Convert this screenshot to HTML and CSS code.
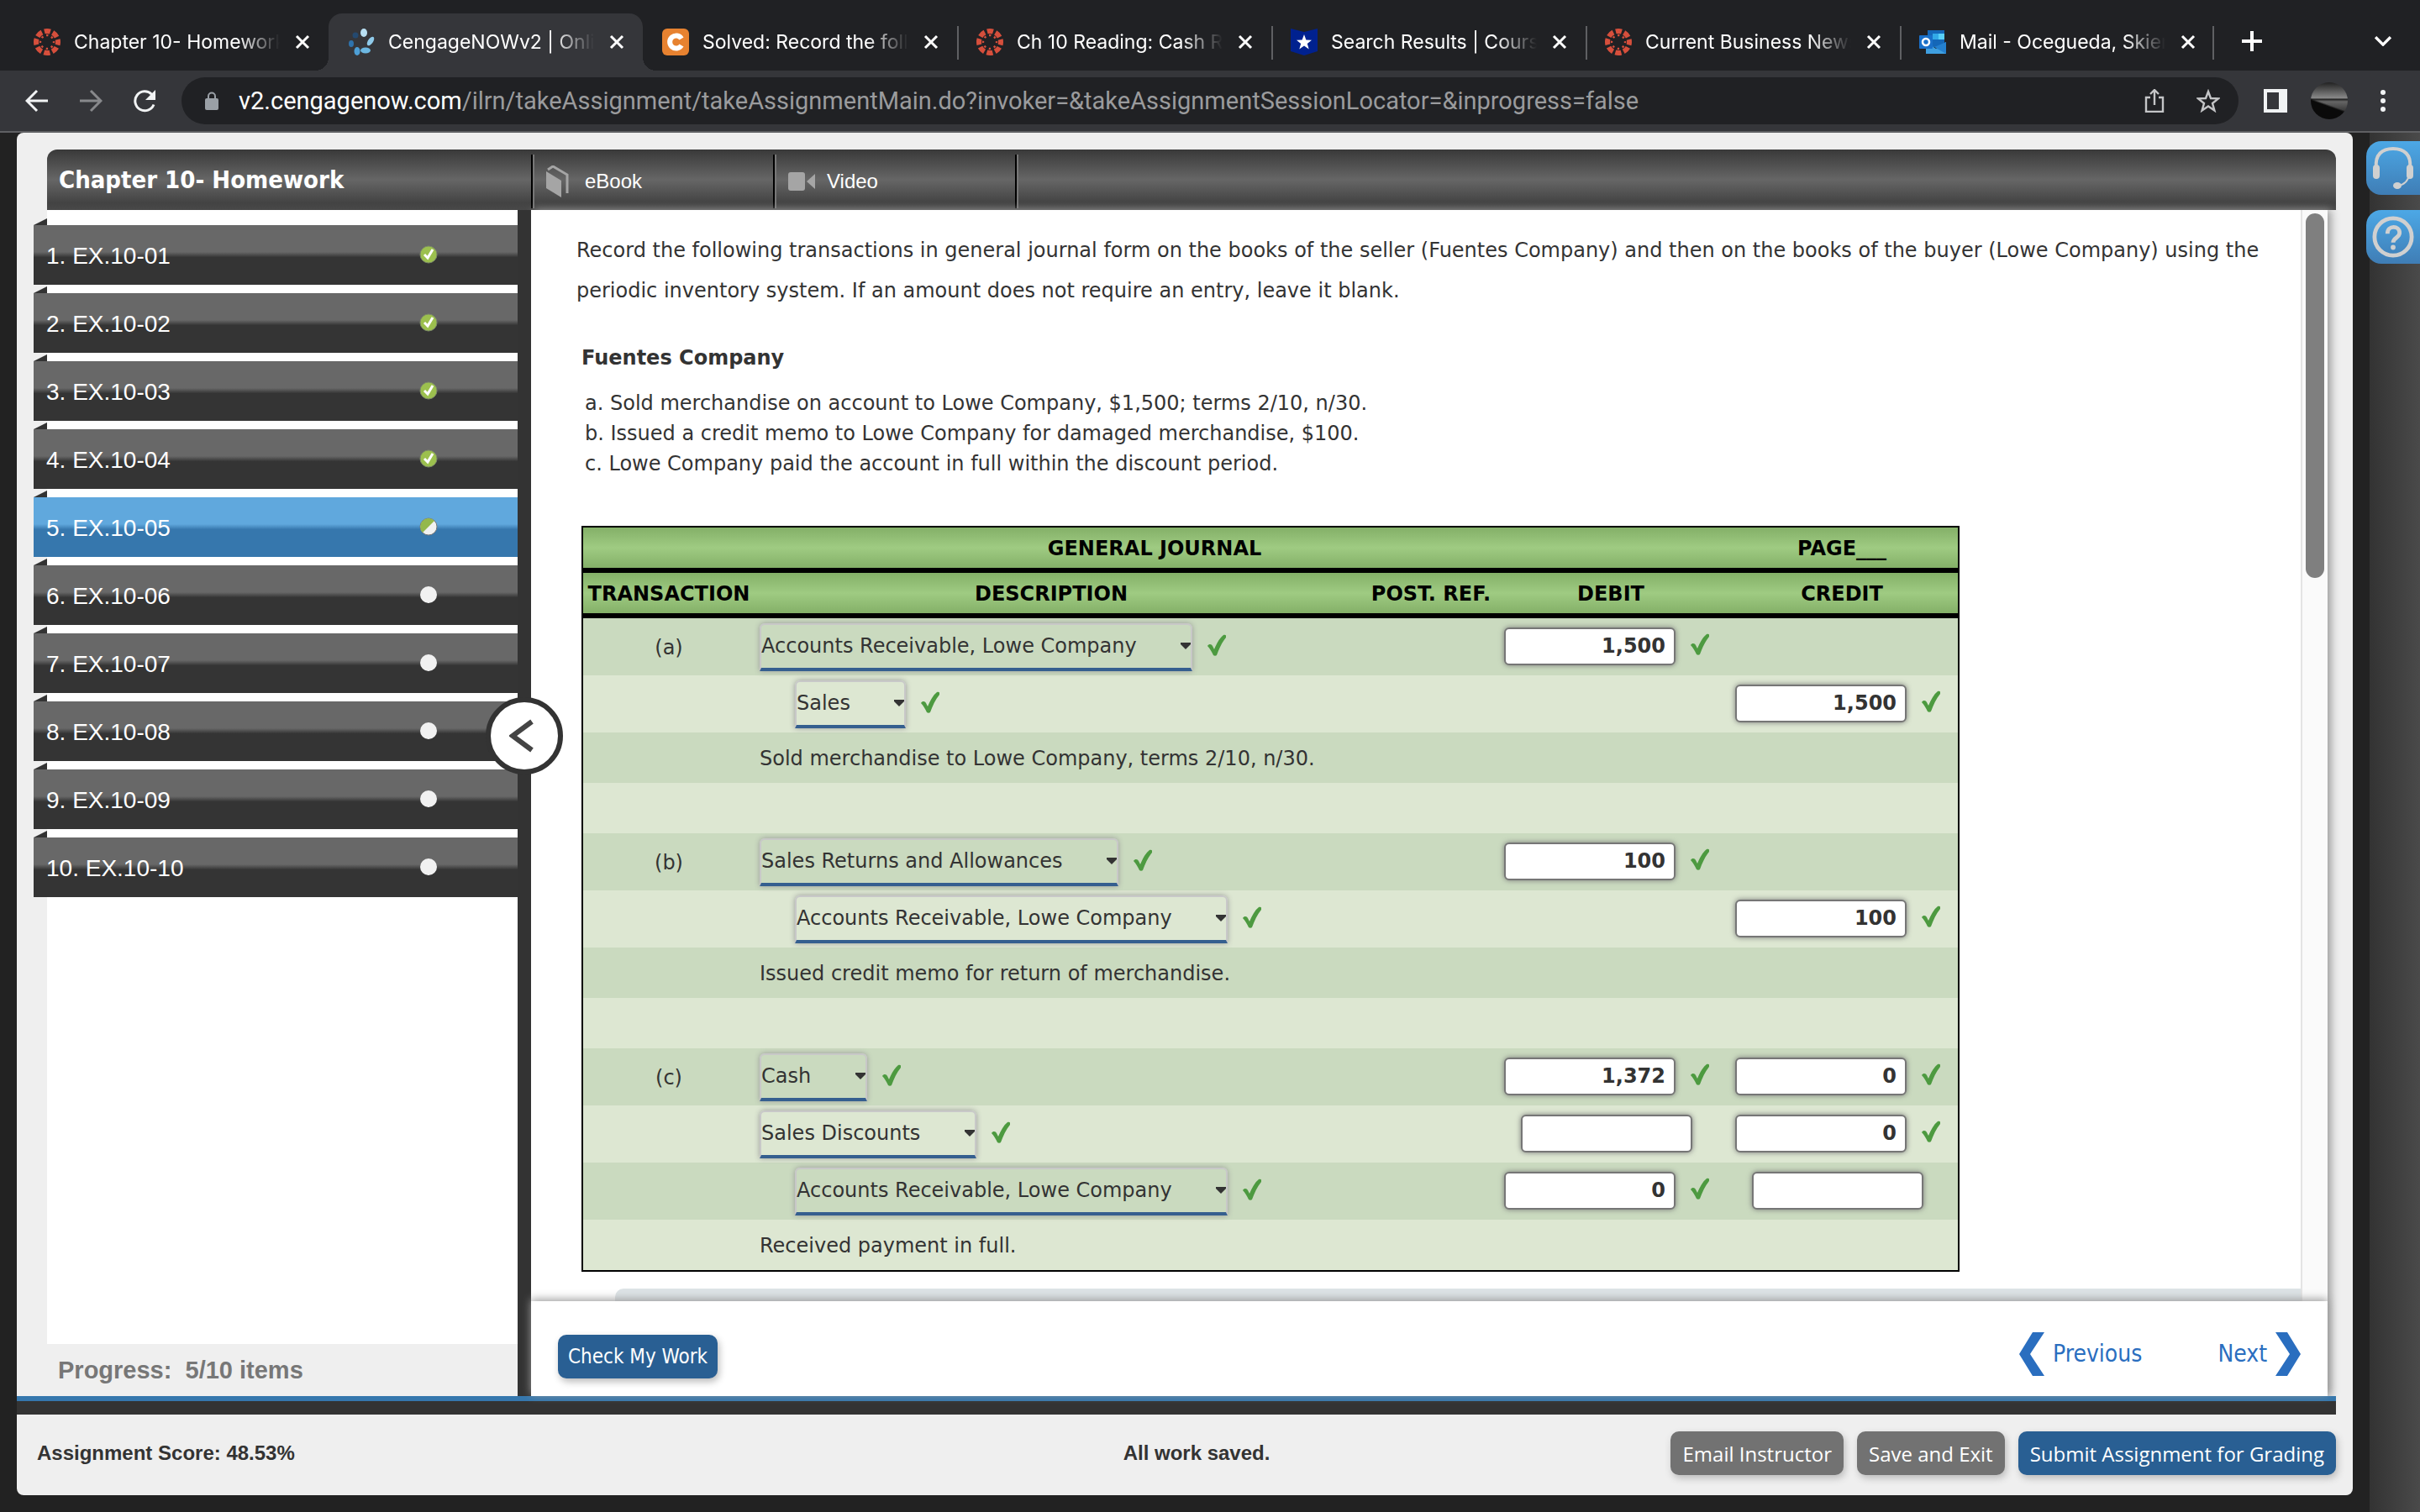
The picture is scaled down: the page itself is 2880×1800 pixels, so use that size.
FILE: index.html
```
<!DOCTYPE html>
<html lang="en">
<head>
  <meta charset="UTF-8">
  <meta name="viewport" content="width=device-width, initial-scale=1">
  <title>CengageNOWv2 | Online teaching and learning</title>
  <link rel="stylesheet" href="styles.css">
</head>
<body>
  <!-- shared icons -->
  <svg class="sprite" aria-hidden="true">
    <symbol id="i-close" viewBox="0 0 18 18"><path d="M2 2l14 14M16 2L2 16" fill="none" stroke="#fff" stroke-width="3"/></symbol>
    <symbol id="i-canvas" viewBox="0 0 32 32">
      <g fill="none" stroke="#d64f3c">
        <circle cx="16" cy="16" r="13" stroke-width="6" stroke-dasharray="7.2 3.01" stroke-dashoffset="3.6"/>
        <circle cx="16" cy="16" r="8" stroke-width="2.4" stroke-dasharray="2.4 3.88" stroke-dashoffset="1.2"/>
      </g>
    </symbol>
    <symbol id="i-check" viewBox="0 0 22 26"><path d="M0 14c2-3 5-2 6 0l2 4C11 11 14 5 19 1c2-1 4 0 3 3-5 6-8 13-11 21-1 1-3 1-4 0C5 21 3 17 0 14z" fill="#4d9a40"/></symbol>
    <symbol id="i-done" viewBox="0 0 22 22">
      <circle cx="11" cy="11" r="10" fill="#9cc04e" stroke="#7c8a68"/>
      <path d="M6 11l4 4 6-10" fill="none" stroke="#fff" stroke-width="3"/>
    </symbol>
    <symbol id="i-half" viewBox="0 0 22 22">
      <circle cx="11" cy="11" r="10" fill="#f1f1f1" stroke="#777"/>
      <path d="M4 18A9.500 9.500 0 0 1 18 4z" fill="#94b84b"/>
    </symbol>
    <symbol id="i-todo" viewBox="0 0 22 22"><circle cx="11" cy="11" r="10" fill="#f1f1f1"/></symbol>
  </svg>

  <div class="tabs">
    <div class="tab"><svg class="fav"><use href="#i-canvas"/></svg><span class="tab-name">Chapter 10- Homework</span><button class="close" aria-label="Close tab"><svg><use href="#i-close"/></svg></button></div>
    <div class="tab active">
      <svg class="fav" viewBox="0 0 32 32">
        <g fill="#4d9fd6">
          <ellipse cx="19" cy="5" rx="4" ry="5" fill="#b9dff2"/><ellipse cx="27" cy="15" rx="3" ry="6" transform="rotate(35 27 15)" fill="#8fcaea"/>
          <ellipse cx="21" cy="26" rx="6" ry="3.500" fill="#6db8e2"/><ellipse cx="11" cy="27" rx="3.500" ry="5"/>
          <ellipse cx="4" cy="18" rx="3" ry="4" fill="#2e73ad"/><circle cx="9" cy="8" r="3.500" fill="#24496f"/>
        </g>
      </svg>
      <span class="tab-name">CengageNOWv2 | Online</span><button class="close" aria-label="Close tab"><svg><use href="#i-close"/></svg></button>
    </div>
    <div class="tab">
      <svg class="fav" viewBox="0 0 32 32"><rect width="32" height="32" rx="6" fill="#e78230"/><path d="M23 12a7.500 7.500 0 1 0 0 8" fill="none" stroke="#fff" stroke-width="6"/></svg>
      <span class="tab-name">Solved: Record the following</span><button class="close" aria-label="Close tab"><svg><use href="#i-close"/></svg></button>
    </div>
    <div class="tab line"><svg class="fav"><use href="#i-canvas"/></svg><span class="tab-name">Ch 10 Reading: Cash Re</span><button class="close" aria-label="Close tab"><svg><use href="#i-close"/></svg></button></div>
    <div class="tab line">
      <svg class="fav" viewBox="0 0 32 32"><path d="M0 0l16 4L32 0v27l-16 5-16-5z" fill="#00218f"/><path d="M16 7l2.400 6.600 6.600.2-5.200 4.200 1.900 6.500L16 20.600l-5.700 3.900 1.900-6.500L7 13.800l6.600-.2z" fill="#fff"/></svg>
      <span class="tab-name">Search Results | Course</span><button class="close" aria-label="Close tab"><svg><use href="#i-close"/></svg></button>
    </div>
    <div class="tab line"><svg class="fav"><use href="#i-canvas"/></svg><span class="tab-name">Current Business News</span><button class="close" aria-label="Close tab"><svg><use href="#i-close"/></svg></button></div>
    <div class="tab line last">
      <svg class="fav" viewBox="0 0 32 32">
        <path d="M10 2h20v20H10z" fill="#1467b8"/><path d="M16 6h7v7h-7z" fill="#32a9e7"/><path d="M23 6h7v7h-7z" fill="#58d0f8"/>
        <path d="M8 16l12 8 12-8v14H8z" fill="#3f9fe0"/><path d="M32 16v14L18 22z" fill="#2480cf"/>
        <rect y="8" width="16" height="16" rx="1" fill="#1a70c9"/><circle cx="8" cy="16" r="4" fill="none" stroke="#fff" stroke-width="2.500"/>
      </svg>
      <span class="tab-name">Mail - Ocegueda, Skier</span><button class="close" aria-label="Close tab"><svg><use href="#i-close"/></svg></button>
    </div>
    <button class="new-tab" aria-label="New tab"><svg viewBox="0 0 24 24"><path d="M12 0v24M0 12h24" stroke="#fff" stroke-width="4"/></svg></button>
    <button class="tab-menu" aria-label="Search tabs"><svg viewBox="0 0 18 12"><path d="M1 2l8 8 8-8" fill="none" stroke="#fff" stroke-width="3"/></svg></button>
  </div>

  <div class="toolbar">
    <button class="nav" aria-label="Back"><svg viewBox="0 0 28 28"><path d="M27 14H3M14 2L2 14l12 12" fill="none" stroke="#f1f3f4" stroke-width="3"/></svg></button>
    <button class="nav" aria-label="Forward"><svg viewBox="0 0 28 28"><path d="M1 14h24M14 2l12 12-12 12" fill="none" stroke="#88898c" stroke-width="3"/></svg></button>
    <button class="nav" aria-label="Reload"><svg viewBox="0 0 28 28"><path d="M25 18.500A11.500 11.500 0 1 1 22.500 6.200" fill="none" stroke="#f1f3f4" stroke-width="3"/><path d="M27 1v12H15z" fill="#f1f3f4"/></svg></button>
    <div class="omnibox">
      <svg class="lock" viewBox="0 0 16 22"><path d="M4 9V5.500a4 4 0 0 1 8 0V9" fill="none" stroke="#9aa0a6" stroke-width="2"/><rect y="8" width="16" height="14" rx="2" fill="#9aa0a6"/></svg>
      <span class="url"><b>v2.cengagenow.com</b>/ilrn/takeAssignment/takeAssignmentMain.do?invoker=&amp;takeAssignmentSessionLocator=&amp;inprogress=false</span>
      <button class="nav" aria-label="Share"><svg viewBox="0 0 28 28"><path d="M9 10H4v17h20V10h-5M14 19V2M9 6l5-5 5 5" fill="none" stroke="#c4c5c7" stroke-width="2.400"/></svg></button>
      <button class="nav" aria-label="Bookmark"><svg viewBox="0 0 28 28"><path d="M14 3l3 8 9 .4-7 5.600 2.400 8.500-7.400-5-7.400 5L9 17l-7-5.600 9-.4z" fill="none" stroke="#c4c5c7" stroke-width="2.400"/></svg></button>
    </div>
    <button class="nav" aria-label="Side panel"><svg viewBox="0 0 28 28"><path d="M0 0h28v28H0zM4 4v20h14V4z" fill="#f1f3f4" fill-rule="evenodd"/></svg></button>
    <span class="avatar"></span>
    <button class="nav" aria-label="Menu"><svg viewBox="0 0 28 28"><g fill="#f1f3f4"><circle cx="14" cy="4" r="3"/><circle cx="14" cy="14" r="3"/><circle cx="14" cy="24" r="3"/></g></svg></button>
  </div>

  <div class="page">
    <div class="panel">
      <header class="bar">
        <h1>Chapter 10- Homework</h1>
        <a class="bar-link" href="#"><svg viewBox="0 0 28 38"><path d="M0 7L18 18v20L0 27z" fill="#a5a5a5"/><path d="M2 5L8 1l17 10v22" fill="none" stroke="#a5a5a5" stroke-width="3"/></svg>eBook</a>
        <a class="bar-link" href="#"><svg class="cam" viewBox="0 0 32 24"><rect y="1" width="20" height="22" rx="3" fill="#a5a5a5"/><path d="M22 12l10-9v18z" fill="#a5a5a5"/></svg>Video</a>
        <span class="bar-end"></span>
      </header>

      <div class="work">
        <aside class="side">
          <nav class="items">
            <a class="item" href="#">1. EX.10-01<svg><use href="#i-done"/></svg></a>
            <a class="item" href="#">2. EX.10-02<svg><use href="#i-done"/></svg></a>
            <a class="item" href="#">3. EX.10-03<svg><use href="#i-done"/></svg></a>
            <a class="item" href="#">4. EX.10-04<svg><use href="#i-done"/></svg></a>
            <a class="item current" href="#">5. EX.10-05<svg><use href="#i-half"/></svg></a>
            <a class="item" href="#">6. EX.10-06<svg><use href="#i-todo"/></svg></a>
            <a class="item" href="#">7. EX.10-07<svg><use href="#i-todo"/></svg></a>
            <a class="item" href="#">8. EX.10-08<svg><use href="#i-todo"/></svg></a>
            <a class="item" href="#">9. EX.10-09<svg><use href="#i-todo"/></svg></a>
            <a class="item" href="#">10. EX.10-10<svg><use href="#i-todo"/></svg></a>
          </nav>
          <p class="progress">Progress:&nbsp; 5/10 items</p>
        </aside>
        <div class="divider">
          <button class="collapse" aria-label="Hide list"><svg viewBox="0 0 30 40"><path d="M27 3L4 20l23 17" fill="none" stroke="#444" stroke-width="6"/></svg></button>
        </div>

        <main class="content">
          <div class="scroll">
            <div class="question">
              <p class="intro">Record the following transactions in general journal form on the books of the seller (Fuentes Company) and then on the books of the buyer (Lowe Company) using the periodic inventory system. If an amount does not require an entry, leave it blank.</p>
              <h2>Fuentes Company</h2>
              <p class="facts">a. Sold merchandise on account to Lowe Company, $1,500; terms 2/10, n/30.<br>b. Issued a credit memo to Lowe Company for damaged merchandise, $100.<br>c. Lowe Company paid the account in full within the discount period.</p>

              <table class="journal">
                <colgroup><col class="c-tran"><col class="c-desc"><col class="c-post"><col class="c-debit"><col class="c-credit"></colgroup>
                <thead>
                  <tr><th colspan="4">GENERAL JOURNAL</th><th>PAGE___</th></tr>
                  <tr><th>TRANSACTION</th><th class="desc">DESCRIPTION</th><th>POST. REF.</th><th>DEBIT</th><th>CREDIT</th></tr>
                </thead>
                <tbody>
                  <tr class="entry">
                    <td class="tran">(a)</td>
                    <td><div class="account"><select aria-label="Account a1"><option>Accounts Receivable, Lowe Company</option></select><svg><use href="#i-check"/></svg></div></td>
                    <td></td>
                    <td><div class="amount"><input type="text" value="1,500" aria-label="Debit a1"><svg><use href="#i-check"/></svg></div></td>
                    <td></td>
                  </tr>
                  <tr class="entry">
                    <td></td>
                    <td><div class="account indent"><select aria-label="Account a2"><option>Sales</option></select><svg><use href="#i-check"/></svg></div></td>
                    <td></td>
                    <td></td>
                    <td><div class="amount"><input type="text" value="1,500" aria-label="Credit a2"><svg><use href="#i-check"/></svg></div></td>
                  </tr>
                  <tr><td></td><td class="note">Sold merchandise to Lowe Company, terms 2/10, n/30.</td><td></td><td></td><td></td></tr>
                  <tr><td></td><td></td><td></td><td></td><td></td></tr>
                  <tr class="entry">
                    <td class="tran">(b)</td>
                    <td><div class="account"><select aria-label="Account b1"><option>Sales Returns and Allowances</option></select><svg><use href="#i-check"/></svg></div></td>
                    <td></td>
                    <td><div class="amount"><input type="text" value="100" aria-label="Debit b1"><svg><use href="#i-check"/></svg></div></td>
                    <td></td>
                  </tr>
                  <tr class="entry">
                    <td></td>
                    <td><div class="account indent"><select aria-label="Account b2"><option>Accounts Receivable, Lowe Company</option></select><svg><use href="#i-check"/></svg></div></td>
                    <td></td>
                    <td></td>
                    <td><div class="amount"><input type="text" value="100" aria-label="Credit b2"><svg><use href="#i-check"/></svg></div></td>
                  </tr>
                  <tr><td></td><td class="note">Issued credit memo for return of merchandise.</td><td></td><td></td><td></td></tr>
                  <tr><td></td><td></td><td></td><td></td><td></td></tr>
                  <tr class="entry">
                    <td class="tran">(c)</td>
                    <td><div class="account"><select aria-label="Account c1"><option>Cash</option></select><svg><use href="#i-check"/></svg></div></td>
                    <td></td>
                    <td><div class="amount"><input type="text" value="1,372" aria-label="Debit c1"><svg><use href="#i-check"/></svg></div></td>
                    <td><div class="amount"><input type="text" value="0" aria-label="Credit c1"><svg><use href="#i-check"/></svg></div></td>
                  </tr>
                  <tr class="entry">
                    <td></td>
                    <td><div class="account"><select aria-label="Account c2"><option>Sales Discounts</option></select><svg><use href="#i-check"/></svg></div></td>
                    <td></td>
                    <td><div class="amount"><input type="text" aria-label="Debit c2"></div></td>
                    <td><div class="amount"><input type="text" value="0" aria-label="Credit c2"><svg><use href="#i-check"/></svg></div></td>
                  </tr>
                  <tr class="entry">
                    <td></td>
                    <td><div class="account indent"><select aria-label="Account c3"><option>Accounts Receivable, Lowe Company</option></select><svg><use href="#i-check"/></svg></div></td>
                    <td></td>
                    <td><div class="amount"><input type="text" value="0" aria-label="Debit c3"><svg><use href="#i-check"/></svg></div></td>
                    <td><div class="amount"><input type="text" aria-label="Credit c3"></div></td>
                  </tr>
                  <tr><td></td><td class="note">Received payment in full.</td><td></td><td></td><td></td></tr>
                </tbody>
              </table>
              <div class="feedback"></div>
            </div>
            <div class="track"><div class="thumb"></div></div>
          </div>

          <div class="actions">
            <button class="btn check">Check My Work</button>
            <a class="step prev" href="#"><svg viewBox="0 0 30 52"><path d="M16 0h14L13 26l17 26H16L0 26z" fill="#2a6ebf"/></svg>Previous</a>
            <a class="step" href="#">Next<svg viewBox="0 0 30 52"><path d="M14 0H0l17 26L0 52h14l16-26z" fill="#2a6ebf"/></svg></a>
          </div>
        </main>
      </div>

      <footer class="foot">
        <span class="score">Assignment Score: 48.53%</span>
        <span class="saved">All work saved.</span>
        <div class="foot-btns">
          <button class="btn gray">Email Instructor</button>
          <button class="btn gray">Save and Exit</button>
          <button class="btn">Submit Assignment for Grading</button>
        </div>
      </footer>
    </div>

    <div class="rail">
      <button class="help" aria-label="Support"><svg viewBox="0 0 50 52"><g fill="none" stroke="#d0d0d0"><path d="M5 26C3 10 12 3 25 3s22 7 20 23" stroke-width="4"/><path d="M44 34c-1 7-6 12-13 13" stroke-width="2"/></g><rect x="1" y="22" width="8" height="17" rx="4" fill="#d0d0d0"/><rect x="41" y="22" width="8" height="17" rx="4" fill="#d0d0d0"/><ellipse cx="30" cy="47" rx="5" ry="4" fill="#d0d0d0"/></svg></button>
      <button class="help" aria-label="Help"><svg viewBox="0 0 52 52"><circle cx="26" cy="26" r="23" fill="none" stroke="#d0d0d0" stroke-width="5"/><path d="M19 22c0-11 15-10 15-1 0 6-8 6-8 12" fill="none" stroke="#d0d0d0" stroke-width="5"/><circle cx="26" cy="39" r="3" fill="#d0d0d0"/></svg></button>
    </div>
  </div>
</body>
</html>
```
FILE: styles.css
```
*{
  padding: 0;
  margin: 0;
  box-sizing: border-box;
}
body{
  display: flex;
  flex-direction: column;
  height: 100vh;
  overflow: hidden;
  background: #222;
  color: #333;
  font-family: "DejaVu Sans", sans-serif;
  font-size: 24px;
}
a{
  text-decoration: none;
}
button{
  border: none;
  background: none;
  cursor: pointer;
}
.sprite{
  display: none;
}

/* browser tabs */
.tabs{
  display: flex;
  align-items: flex-end;
  height: 84px;
  padding: 0 24px 0 17px;
  background: #202124;
}
.tab{
  display: flex;
  align-items: center;
  flex: 0 1 374px;
  min-width: 0;
  height: 68px;
  padding: 0 22px 0 23px;
  color: #fff;
  font-family: Inter, sans-serif;
  font-size: 23px;
}
.tab.active{
  position: relative;
  background: #35363a;
  border-radius: 16px 16px 0 0;
}
.tab.active::before, .tab.active::after{
  content: "";
  position: absolute;
  bottom: 0;
  width: 16px;
  height: 16px;
}
.tab.active::before{
  right: 100%;
  background: radial-gradient(circle at 0 0, transparent 16px, #35363a 16px);
}
.tab.active::after{
  left: 100%;
  background: radial-gradient(circle at 100% 0, transparent 16px, #35363a 16px);
}
.tab.line{
  background: linear-gradient(#5f6063, #5f6063) 0 15px / 2px 40px no-repeat;
}
.tab.last{
  background: linear-gradient(#5f6063, #5f6063) 0 15px / 2px 40px no-repeat, linear-gradient(#5f6063, #5f6063) 100% 15px / 2px 40px no-repeat;
}
.fav{
  flex: none;
  width: 32px;
  height: 32px;
  margin-right: 16px;
}
.tab-name{
  flex: 1;
  min-width: 0;
  overflow: hidden;
  white-space: nowrap;
  -webkit-mask-image: linear-gradient(90deg, #000 80%, transparent);
  mask-image: linear-gradient(90deg, #000 80%, transparent);
}
.close{
  margin-left: 18px;
}
.close svg{
  display: block;
  width: 18px;
  height: 18px;
}
.new-tab{
  width: 24px;
  height: 68px;
  margin: 0 auto 0 33px;
}
.new-tab svg, .tab-menu svg{
  width: 100%;
}
.tab-menu{
  width: 20px;
  height: 68px;
  margin-right: 10px;
}

/* address bar */
.toolbar{
  display: flex;
  align-items: center;
  gap: 36px;
  height: 74px;
  padding: 0 30px;
  background: #35363a;
  border-bottom: 2px solid #5f6063;
}
.nav svg{
  display: block;
  width: 28px;
  height: 28px;
}
.omnibox{
  display: flex;
  align-items: center;
  flex: 1;
  gap: 36px;
  height: 56px;
  margin: 0 -6px;
  padding: 0 22px 0 28px;
  border-radius: 28px;
  background: #202124;
}
.lock{
  width: 16px;
  height: 22px;
  margin-right: -12px;
}
.url{
  flex: 1;
  color: #9a9b9d;
  font-family: Roboto, sans-serif;
  font-size: 29px;
}
.url b{
  color: #fff;
  font-weight: 400;
}
.avatar{
  width: 44px;
  height: 44px;
  margin: 0 -8px;
  border-radius: 50%;
  background: linear-gradient(200deg, transparent 58%, #0a0a0a 62%), linear-gradient(#222, #888 42%, #222 46%, #666 52%, #222 90%);
}

/* page frame */
.page{
  display: flex;
  flex: 1;
  min-height: 0;
}
.panel{
  display: flex;
  flex-direction: column;
  flex: 1;
  margin: 0 20px 20px;
  border-radius: 8px;
  background: #efefef;
}
.bar{
  display: flex;
  align-items: stretch;
  height: 72px;
  margin: 20px 20px 0 36px;
  border-radius: 12px 12px 0 0;
  background: linear-gradient(#393939, #666 50%, #434343 88%, #484848);
  color: #fff;
}
.bar h1{
  width: 576px;
  padding-left: 14px;
  font: bold 29px/72px "DejaVu Sans Condensed", "DejaVu Sans", sans-serif;
}
.bar-link{
  display: flex;
  align-items: center;
  gap: 18px;
  width: 288px;
  height: 64px;
  margin-top: 6px;
  padding-left: 16px;
  border-left: 2px solid #000;
  box-shadow: inset 2px 0 #777;
  color: #fff;
  font-family: "Liberation Sans", sans-serif;
  font-size: 24px;
}
.bar-link svg{
  width: 28px;
  height: 38px;
}
.bar-link .cam{
  width: 32px;
  height: 24px;
  margin-right: -4px;
}
.bar-end{
  height: 64px;
  margin-top: 6px;
  border-left: 2px solid #000;
  box-shadow: 2px 0 #777;
}
.work{
  display: flex;
  flex: 1;
  min-height: 0;
  padding-right: 30px;
}

/* assignment list */
.side{
  display: flex;
  flex-direction: column;
  width: 596px;
}
.items{
  flex: 1;
  padding: 18px 0 0 20px;
  background: linear-gradient(90deg, #efefef 36px, #fff 36px);
}
.item{
  display: flex;
  align-items: center;
  justify-content: space-between;
  position: relative;
  height: 71px;
  margin-bottom: 10px;
  padding: 3px 95px 0 15px;
  background: linear-gradient(#686868 45%, #343434 54%);
  color: #fff;
  font: 28px "Liberation Sans", sans-serif;
}
.item::before{
  content: "";
  position: absolute;
  left: 0;
  top: -8px;
  width: 16px;
  height: 8px;
  background: #333;
  clip-path: polygon(100% 0, 100% 100%, 0 100%);
}
.item.current{
  background: linear-gradient(#60a8dd 45%, #3677ad 54%);
}
.item svg{
  width: 22px;
  height: 22px;
  margin-bottom: 4px;
}
.progress{
  height: 62px;
  padding-left: 49px;
  color: #777;
  font: bold 29px/62px "Liberation Sans", sans-serif;
}
.divider{
  position: relative;
  width: 16px;
  background: #333;
}
.collapse{
  position: absolute;
  top: 580px;
  left: -38px;
  z-index: 1;
  width: 92px;
  height: 92px;
  border: 6px solid #333;
  border-radius: 50%;
  background: #fff;
}
.collapse svg{
  width: 30px;
  height: 40px;
  margin-right: 6px;
  vertical-align: middle;
}

/* question */
.content{
  display: flex;
  flex-direction: column;
  flex: 1;
  min-width: 0;
  background: #fff;
  box-shadow: 4px 0 10px #999;
}
.scroll{
  display: flex;
  flex: 1;
  min-height: 0;
  overflow: hidden;
}
.question{
  flex: 1;
  padding: 24px 30px 0 54px;
}
.intro{
  line-height: 48px;
}
.question h2{
  margin: 32px 0 0 6px;
  font-size: 24px;
  line-height: 48px;
}
.facts{
  margin: 12px 0 56px 10px;
  line-height: 36px;
}
.track{
  width: 32px;
  padding: 4px 4px 0;
  border-left: 2px solid #e4e4e4;
  background: #fafafa;
}
.thumb{
  width: 22px;
  height: 434px;
  border-radius: 11px;
  background: #7f7f7f;
}
.journal{
  width: 1640px;
  margin-left: 6px;
  border: 2px solid #000;
  border-spacing: 0;
  table-layout: fixed;
}
.c-tran{
  width: 204px;
}
.c-desc{
  width: 728px;
}
.c-post{
  width: 154px;
}
.c-debit{
  width: 274px;
}
.c-credit{
  width: 276px;
}
.journal th{
  height: 54px;
  padding-top: 2px;
  border-bottom: 6px solid #000;
  background: linear-gradient(#84b068, #9fcb82 50%, #84b068);
  color: #000;
  font-size: 24px;
  line-height: 40px;
  white-space: nowrap;
}
.journal th.desc{
  padding-right: 22px;
}
.journal td{
  height: 60px;
}
.journal .entry td{
  height: 68px;
}
.journal tbody tr{
  background: #dde7d2;
}
.journal tbody tr:nth-child(odd){
  background: #cadabf;
}
.journal .tran{
  padding-top: 2px;
  text-align: center;
}
.journal .note{
  padding: 2px 0 0 6px;
}
.account{
  display: flex;
  align-items: center;
  gap: 18px;
  padding-left: 6px;
}
.account.indent{
  padding-left: 48px;
}
.account select{
  height: 57px;
  padding: 0 64px 0 0;
  appearance: none;
  border: 2px solid #c8c8c8;
  border-bottom: 4px solid #355f8f;
  border-radius: 6px 6px 0 0;
  background: url("data:image/svg+xml,%3Csvg xmlns='http://www.w3.org/2000/svg' viewBox='0 0 12 8'%3E%3Cpath d='M0 0h12v2L6 8 0 2z' fill='%23333'/%3E%3C/svg%3E") right 0 center / 12px 8px no-repeat;
  box-shadow: 0 0 6px #999;
  color: #333;
  font: 24px "DejaVu Sans", sans-serif;
}
.account svg, .amount svg{
  width: 22px;
  height: 26px;
  margin-bottom: 4px;
}
.amount{
  display: flex;
  align-items: center;
  justify-content: center;
  gap: 18px;
  padding: 0 10px 2px 0;
}
.amount input{
  width: 204px;
  height: 45px;
  padding: 0 10px;
  border: 2px solid #767676;
  border-radius: 6px;
  background: #fff;
  box-shadow: 0 0 6px #777;
  color: #333;
  font: bold 24px "DejaVu Sans", sans-serif;
  text-align: right;
}
.feedback{
  height: 40px;
  margin: 20px -62px 0 46px;
  border-radius: 10px 10px 0 0;
  background: #dde3e6;
}
.actions{
  display: flex;
  align-items: center;
  position: relative;
  height: 113px;
  padding: 18px 32px 0;
  background: #fff;
  box-shadow: 0 -2px 10px #999;
}
.step{
  display: flex;
  align-items: center;
  gap: 10px;
  margin: 0 0 6px 90px;
  color: #2a6ebf;
  font: 28px "DejaVu Sans Condensed", "DejaVu Sans", sans-serif;
}
.step.prev{
  margin-left: auto;
}
.step svg{
  width: 30px;
  height: 52px;
}
.btn{
  height: 52px;
  padding: 0 14px;
  border-radius: 10px;
  background: #295f93;
  box-shadow: 2px 4px 8px #bbb;
  color: #fff;
  font: 24px "Open Sans", sans-serif;
}
.btn.check{
  padding: 0 12px;
  font-family: "DejaVu Sans Condensed", "DejaVu Sans", sans-serif;
}
.btn.gray{
  background: #727272;
}

/* footer */
.foot{
  display: grid;
  grid-template-columns: 1fr auto 1fr;
  align-items: center;
  height: 118px;
  margin-right: 20px;
  padding: 0 0 4px 24px;
  border-top: 6px solid #3577ad;
  box-shadow: inset 0 16px #333;
  font: bold 24px "Liberation Sans", sans-serif;
}
.score, .saved, .foot-btns{
  padding-top: 16px;
}
.saved{
  padding-left: 24px;
}
.foot-btns{
  display: flex;
  justify-content: flex-end;
  gap: 16px;
}

/* help rail */
.rail{
  display: flex;
  flex-direction: column;
  align-items: flex-end;
  gap: 18px;
  width: 60px;
  padding-top: 10px;
  background: linear-gradient(90deg, #333, #4a4a4a);
}
.help{
  width: 64px;
  height: 64px;
  border-radius: 18px 0 0 18px;
  background: linear-gradient(#4ca8e6, #3f7db5);
}
.help svg{
  width: 50px;
  height: 52px;
  vertical-align: middle;
}
```
